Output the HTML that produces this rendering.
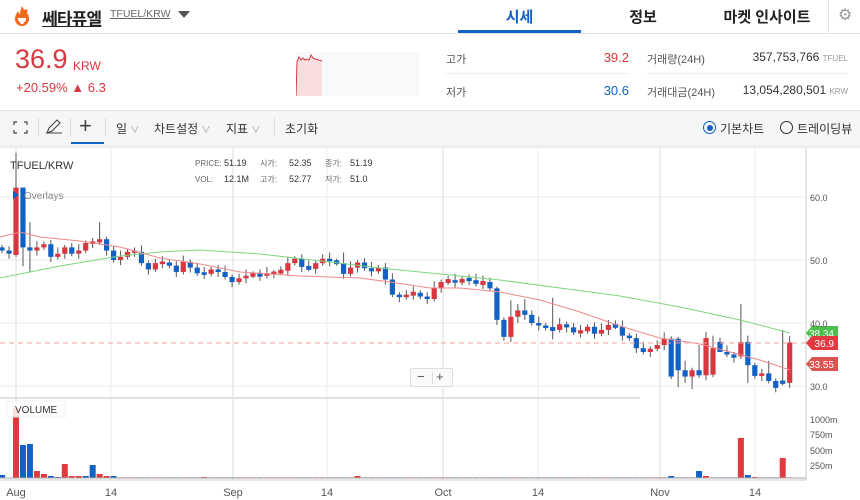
<!DOCTYPE html>
<html><head><meta charset="utf-8">
<style>
*{margin:0;padding:0;box-sizing:border-box}
body{width:860px;height:500px;overflow:hidden;background:#fff;font-family:"Liberation Sans","Noto Sans CJK KR",sans-serif;color:#333;position:relative}
.a{position:absolute;white-space:nowrap}
</style></head><body>
<!-- header -->
<svg class="a" style="left:12px;top:5px" width="20" height="24" viewBox="0 0 20 24"><path d="M10 1C11 5 17 7 17 14a7 7 0 0 1-14 0c0-4 2-6 3-8 1 2 1 3 2 3 0-3 1-6 2-8z" fill="#f26b1d"/><path d="M6 13h8v2l-3 4H9L6 15z" fill="#fff"/><circle cx="14" cy="6" r="1.6" fill="#f26b1d"/></svg>
<div class="a" style="left:42px;top:5px;font-size:17px;font-weight:bold;color:#222;text-decoration:underline;letter-spacing:-0.8px">쎄타퓨엘</div>
<div class="a" style="left:110px;top:8px;font-size:10.5px;color:#666;text-decoration:underline">TFUEL/KRW</div>
<div class="a" style="left:178px;top:11px;width:0;height:0;border-left:6px solid transparent;border-right:6px solid transparent;border-top:7px solid #555"></div>
<div class="a" style="left:458px;top:6px;width:123px;text-align:center;font-size:15px;font-weight:bold;color:#1261c4">시세</div>
<div class="a" style="left:458px;top:30px;width:123px;height:3px;background:#1261c4"></div>
<div class="a" style="left:600px;top:6px;width:86px;text-align:center;font-size:15px;font-weight:bold;color:#222">정보</div>
<div class="a" style="left:712px;top:6px;width:110px;text-align:center;font-size:15px;font-weight:bold;color:#222">마켓 인사이트</div>
<div class="a" style="left:828px;top:0;width:1px;height:33px;background:#e5e5e5"></div>
<div class="a" style="left:838px;top:5px;font-size:16px;color:#999">⚙</div>
<div class="a" style="left:0;top:33px;width:860px;height:1px;background:#e3e3e3"></div>
<!-- price -->
<div class="a" style="left:15px;top:44px;font-size:27px;color:#d93740">36.9</div>
<div class="a" style="left:73px;top:59px;font-size:12px;color:#d93740">KRW</div>
<div class="a" style="left:16px;top:80px;font-size:13px;color:#d93740">+20.59% ▲ 6.3</div>
<svg class="a" style="left:296px;top:52px" width="123" height="44"><rect x="0" y="0" width="123" height="44" fill="#f8f9fb"/><path d="M0 44L1 10 3 5 5 8 7 6 9 8 11 7 13 8 15 3 17 6 19 7 26 9V44z" fill="#f7dfe0"/><path d="M0 44L1 10 3 5 5 8 7 6 9 8 11 7 13 8 15 3 17 6 19 7 26 9" fill="none" stroke="#d93740" stroke-width="1"/></svg>
<div class="a" style="left:446px;top:51px;font-size:11px;color:#555">고가</div>
<div class="a" style="left:560px;top:50px;width:69px;text-align:right;font-size:13px;color:#d93740">39.2</div>
<div class="a" style="left:446px;top:73px;width:183px;height:1px;background:#eee"></div>
<div class="a" style="left:446px;top:84px;font-size:11px;color:#555">저가</div>
<div class="a" style="left:560px;top:83px;width:69px;text-align:right;font-size:13px;color:#1261c4">30.6</div>
<div class="a" style="left:647px;top:51px;font-size:11px;color:#555">거래량(24H)</div>
<div class="a" style="left:700px;top:50px;width:148px;text-align:right;font-size:12px;color:#333">357,753,766 <span style="font-size:8px;color:#999">TFUEL</span></div>
<div class="a" style="left:647px;top:73px;width:201px;height:1px;background:#eee"></div>
<div class="a" style="left:647px;top:84px;font-size:11px;color:#555">거래대금(24H)</div>
<div class="a" style="left:700px;top:83px;width:148px;text-align:right;font-size:12px;color:#333">13,054,280,501 <span style="font-size:8px;color:#999">KRW</span></div>
<!-- toolbar -->
<div class="a" style="left:0;top:110px;width:860px;height:35px;background:#f5f6f8;border-top:1px solid #e3e3e3"></div>
<svg class="a" style="left:13px;top:121px" width="15" height="13" fill="none" stroke="#444" stroke-width="1.2"><path d="M1 4V1h3M11 1h3v3M14 9v3h-3M4 12H1V9"/></svg>
<div class="a" style="left:38px;top:118px;width:1px;height:18px;background:#ddd"></div>
<svg class="a" style="left:45px;top:119px" width="18" height="16" fill="none" stroke="#444" stroke-width="1.1"><path d="M2 14L4 9 12 1l3 3-8 8-5 2zM2 14h15"/></svg>
<div class="a" style="left:70px;top:118px;width:1px;height:18px;background:#ddd"></div>
<div class="a" style="left:79px;top:113px;font-size:22px;color:#444;font-weight:300">+</div>
<div class="a" style="left:71px;top:142px;width:33px;height:2px;background:#1261c4"></div>
<div class="a" style="left:105px;top:118px;width:1px;height:18px;background:#ddd"></div>
<div class="a" style="left:116px;top:120px;font-size:12px;color:#333">일 <span style="color:#999;font-size:9px">∨</span></div>
<div class="a" style="left:154px;top:120px;font-size:12px;color:#333">차트설정 <span style="color:#999;font-size:9px">∨</span></div>
<div class="a" style="left:226px;top:120px;font-size:12px;color:#333">지표 <span style="color:#999;font-size:9px">∨</span></div>
<div class="a" style="left:274px;top:118px;width:1px;height:18px;background:#ddd"></div>
<div class="a" style="left:285px;top:120px;font-size:12px;color:#333">초기화</div>
<div class="a" style="left:703px;top:121px;width:13px;height:13px;border:1.5px solid #1261c4;border-radius:50%"></div>
<div class="a" style="left:706.5px;top:124.5px;width:6px;height:6px;background:#1261c4;border-radius:50%"></div>
<div class="a" style="left:720px;top:120px;font-size:12px;color:#333">기본차트</div>
<div class="a" style="left:780px;top:121px;width:13px;height:13px;border:1.5px solid #333;border-radius:50%"></div>
<div class="a" style="left:797px;top:120px;font-size:12px;color:#333">트레이딩뷰</div>
<div class="a" style="left:0;top:145px;width:860px;height:3px;background:#eceef2"></div>
<!-- chart -->
<svg id="ch" class="a" style="left:0;top:148px" width="860" height="352" viewBox="0 148 860 352" font-family="Liberation Sans, Noto Sans CJK KR, sans-serif"></svg>
<div class="a" style="left:410px;top:368px;width:43px;height:19px;border:1px solid #ddd;background:#fafafa;border-radius:2px;font-size:13px;color:#555"><span style="position:absolute;left:6px;top:0">−</span><span style="position:absolute;left:25px;top:0">+</span><span style="position:absolute;left:21px;top:3px;width:1px;height:12px;background:#ddd"></span></div>
<script>
var s='';
function L(x1,y1,x2,y2,c,w,d){s+='<line x1="'+x1+'" y1="'+y1+'" x2="'+x2+'" y2="'+y2+'" stroke="'+c+'" stroke-width="'+(w||1)+'"'+(d?' stroke-dasharray="'+d+'"':'')+'/>';}
function T(x,y,t,sz,c,a){s+='<text x="'+x+'" y="'+y+'" font-size="'+sz+'" fill="'+c+'"'+(a?' text-anchor="'+a+'"':'')+'>'+t+'</text>';}
[197,260,323,386].forEach(function(y){L(0,y,806,y,'#ebebeb');});
[111,327,538,755].forEach(function(x){L(x,148,x,480,'#ededed');});
[16,233,443,660].forEach(function(x){L(x,148,x,480,'#dcdcdc');});
L(0,398,640,398,'#e0e0e0',2);
L(806,148,806,480,'#ccc');L(0,480,806,480,'#ccc');
var C=[51.5,51,61.5,52,51.5,52,52.5,50.5,51,52,51,51.5,52.7,52.8,53.3,51.5,50,50.5,51.3,51.3,49.5,48.5,49.5,49.6,49.1,48.1,49.7,48.8,47.9,47.8,48.5,48.1,47.3,46.5,47.1,47.5,47.8,47.5,47.9,48,48.3,49.5,50.2,48.9,48.6,49.5,50.2,49.8,49.5,47.8,48.8,49.6,48.7,48.2,48.8,46.9,44.5,44.1,44.5,44.8,44.2,43.8,45.6,46.5,46.8,46.4,47,46.8,46.2,46.5,45.5,40.5,37.8,41,42,41.3,40,39.6,39.2,38.9,39.8,39.3,38.5,38.7,39.4,38.3,38.9,39.7,39.4,38,37.6,36,35.4,35.9,36.5,37.5,31.5,32.5,31.5,32.5,31.7,37.6,36,35.4,35,34.5,37,33.3,31.6,32,30.8,29.7,30.5,36.9];
var O=C.slice();O.unshift(52);
O[2]=50.8;O[97]=37.5;O[102]=31.8;O[106]=34.7;O[112]=30.7;O[103]=37;
function X(i){return 16+(i-2)*6.97;}function Y(p){return 260-(p-50)*6.3;}
var H={2:67,3:58,4:56,14:56,49:51.2,69:47.5,71:45.8,73:43.6,75:43.8,79:44,87:40.5,97:37.8,98:34,100:36.5,102:38,106:43,112:38.9,110:34};
var Lo={2:50.5,3:49,4:48,97:29.8,99:29.5,98:30.5,103:36,107:30.5,111:29,72:37.2,74:40,79:37.4};
for(var i=0;i<C.length;i++){var o=O[i],c=C[i],x=X(i),up=c>=o,col=up?'#d93740':'#1261c4';
var hi=H[i]||Math.max(o,c)+0.4+(i%3)*0.3,lo=Lo[i]||Math.min(o,c)-0.4-(i%2)*0.4;
L(x,Y(hi),x,Y(lo),'#555');var t=Y(Math.max(o,c)),b=Y(Math.min(o,c));if(b-t<2){t-=1;b+=1;}
s+='<rect x="'+(x-2.6)+'" y="'+t+'" width="5.2" height="'+(b-t)+'" fill="'+col+'"/>';}
s+='<polyline fill="none" stroke="#7fd47f" stroke-width="1" points="0,278 60,266 120,256 160,252 200,250 260,254 330,262 380,268 440,274 500,280 560,288 620,296 680,307 740,320 790,333"/>';
s+='<polyline fill="none" stroke="#f08a8a" stroke-width="1" points="0,237 20,232 40,237 80,241 120,247 160,258 200,264 240,272 300,276 360,278 390,282 430,288 460,288 500,292 540,300 580,312 620,326 660,338 700,344 730,352 760,360 790,370"/>';
L(0,343,806,343,'#f3a0a0',1,'5,4');
function tag(y,t,c){s+='<path d="M806 '+y+'l6 -7h26v14h-26z" fill="'+c+'"/>';T(834,y+4,t,10,'#fff','end');}
tag(333,'38.34','#4cbf4c');tag(364,'33.55','#d9544f');tag(343,'36.9','#e0393f');
[['60.0',197],['50.0',260],['40.0',323],['30.0',386]].forEach(function(a){T(810,a[1]+4,a[0],9,'#555');});
[['1000m',419],['750m',434],['500m',450],['250m',465]].forEach(function(a){T(810,a[1]+4,a[0],9,'#555');});
var V={0:[3,0],1:[0,0],2:[70,1],3:[33,0],4:[34,0],5:[7,1],6:[4,1],7:[2,0],8:[1,0],9:[14,1],10:[2,1],11:[2,1],12:[2,0],13:[13,0],14:[4,1],15:[2,1],16:[2,0],29:[1,1],51:[2,1],96:[2,0],100:[7,0],101:[2,1],106:[40,1],107:[3,0],108:[1,1],112:[20,1]};
for(var i=0;i<C.length;i++){var v=V[i]||[0.8,C[i]>=O[i]?1:0];var h=v[0];s+='<rect x="'+(X(i)-3)+'" y="'+(478-h)+'" width="6" height="'+h+'" fill="'+(v[1]?'#e0393f':'#1261c4')+'" opacity="'+(V[i]?1:0.6)+'"/>';}
L(0,478,806,478,'#aaa');
s+='<rect x="7" y="401" width="58" height="16" fill="#fff" opacity="0.85" stroke="#eee"/>';
T(15,413,'VOLUME',10,'#333');
T(10,169,'TFUEL/KRW',11,'#333');
s+='<path d="M13 191v8l6-4z" fill="#1261c4"/>';T(24,199,'Overlays',10,'#888');
T(195,166,'PRICE:',8,'#666');T(224,166,'51.19',9,'#333');T(260,166,'시가:',8,'#666');T(289,166,'52.35',9,'#333');T(325,166,'종가:',8,'#666');T(350,166,'51.19',9,'#333');
T(195,182,'VOL:',8,'#666');T(224,182,'12.1M',9,'#333');T(260,182,'고가:',8,'#666');T(289,182,'52.77',9,'#333');T(325,182,'저가:',8,'#666');T(350,182,'51.0',9,'#333');
[['Aug',16],['14',111],['Sep',233],['14',327],['Oct',443],['14',538],['Nov',660],['14',755]].forEach(function(a){T(a[1],496,a[0],11,'#555','middle');});
document.getElementById('ch').innerHTML=s;
</script>
</body></html>
